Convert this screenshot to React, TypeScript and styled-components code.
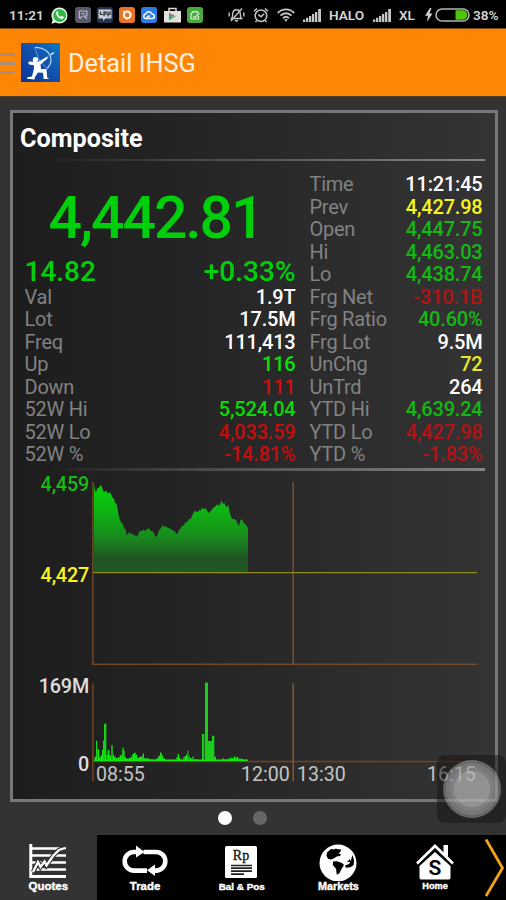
import React from 'react';
import styled, { createGlobalStyle } from 'styled-components';

const GlobalStyle = createGlobalStyle`
  * { box-sizing: border-box; }
  body { margin: 0; background: #333; font-family: Roboto, sans-serif; }
  svg { display: block; flex: none; }
`;

const RED = '#c40d0d';
const YELLOW = '#f8f51c';
const WHITE = '#fff';

const Screen = styled.div`
  position: relative;
  width: 506px;
  height: 900px;
  overflow: hidden;
  display: flex;
  flex-direction: column;
  background: #333;
`;

/* status bar */

const StatusBar = styled.div`
  height: 28px;
  flex: none;
  display: flex;
  align-items: center;
  justify-content: space-between;
  padding: 2px 8px 0 9px;
  background: #000;
  color: #d4d4d4;
`;

const StatusGroup = styled.div<{ $gap: number }>`
  display: flex;
  align-items: center;
  gap: ${(p) => p.$gap}px;
`;

const StatusText = styled.span<{ $width: number }>`
  width: ${(p) => p.$width}px;
  font-size: 13.6px;
  line-height: 16px;
  font-weight: 600;
  white-space: nowrap;
`;

const NotifyTile = styled.svg<{ $bg: string }>`
  width: 16px;
  height: 16px;
  border-radius: 3px;
  background: ${(p) => p.$bg};
`;

/* app bar */

const AppBar = styled.header`
  height: 69px;
  flex: none;
  display: flex;
  align-items: center;
  background: #ff8604;
  border-top: 1px solid #7a430c;
  border-bottom: 1px solid #4b3c2a;
`;

const MenuBars = styled.div`
  width: 15px;
  height: 21px;
  display: flex;
  flex-direction: column;
  justify-content: space-between;
  margin-right: 6px;
  margin-top: 2px;
`;

const MenuLine = styled.span`
  height: 3px;
  background: #a88d78;
`;

const AppTitle = styled.h1`
  margin: 2px 0 0 8px;
  font-size: 25.3px;
  line-height: 30px;
  font-weight: 400;
  color: #fff0e2;
`;

/* panel */

const Panel = styled.main`
  flex: none;
  height: 692px;
  margin: 13px 8px 0 10px;
  display: flex;
  flex-direction: column;
  border: 3px solid #777;
  background: linear-gradient(90deg, #1d1d1d, #242424 35%, #2d2d2d 70%, #343434);
`;

const PanelTitle = styled.h2`
  margin: 0;
  height: 46px;
  padding: 11px 0 0 7px;
  font-size: 25.2px;
  line-height: 30px;
  font-weight: 700;
  color: #fff;
`;

const Divider = styled.div<{ $size: number }>`
  flex: none;
  height: ${(p) => p.$size}px;
  margin: 0 10px 0 7px;
  background: linear-gradient(90deg, transparent 6%, #4a4a4a 40%, #858585);
`;

const Stats = styled.section`
  display: grid;
  grid-template-columns: 271px 173px;
  column-gap: 14px;
  height: 307px;
  padding: 12px 0 0 11.5px;
  flex: none;
`;

const StatColumn = styled.div`
  display: flex;
  flex-direction: column;
`;

const LastPrice = styled.div`
  height: 82px;
  padding-top: 13px;
  padding-right: 9px;
  text-align: center;
  font-size: 59px;
  line-height: 63px;
  font-weight: 500;
  letter-spacing: -2.1px;
  color: #00cf0b;
`;

const ChangeLine = styled.div`
  height: 30.5px;
  display: flex;
  justify-content: space-between;
  font-size: 28px;
  line-height: 33px;
  font-weight: 500;
  color: #00cf0b;
`;

const Row = styled.div`
  height: 22.5px;
  display: flex;
  justify-content: space-between;
  font-size: 20px;
  line-height: 22.5px;
`;

const Label = styled.span`
  letter-spacing: -0.25px;
  color: #828282;
`;

const Value = styled.span<{ $color: string }>`
  font-weight: 500;
  letter-spacing: -0.2px;
  color: ${(p) => p.$color};
`;

/* charts */

const ChartRow = styled.section<{ $height: number; $gap: number }>`
  flex: none;
  display: grid;
  grid-template-columns: 76px 388px;
  grid-template-rows: 100%;
  column-gap: 2px;
  height: ${(p) => p.$height}px;
  margin-top: ${(p) => p.$gap}px;
`;

const AxisLabels = styled.div<{ $shift: number }>`
  display: flex;
  flex-direction: column;
  align-items: flex-end;
  margin-top: ${(p) => p.$shift}px;
`;

const AxisLabel = styled.span<{ $color: string; $step: number }>`
  flex: none;
  height: ${(p) => p.$step}px;
  font-size: 19.8px;
  line-height: 23px;
  font-weight: 500;
  letter-spacing: -0.2px;
  color: ${(p) => p.$color};
`;

const Plot = styled.svg`
  width: 388px;
  height: 100%;
  overflow: visible;
`;

const TimeAxis = styled.div`
  display: grid;
  grid-template-columns: 145px 56px 130px 50px;
  padding-left: 83px;
  margin-top: 1px;
  font-size: 19.6px;
  line-height: 23px;
  font-weight: 400;
  color: #c4c4c4;
`;

const Pager = styled.div`
  flex: none;
  height: 33px;
  display: flex;
  justify-content: center;
  align-items: center;
  gap: 21px;
  padding: 0 21px 1px 0;
`;

const PagerDot = styled.span<{ $active?: boolean }>`
  width: 14px;
  height: 14px;
  border-radius: 50%;
  background: ${(p) => (p.$active ? '#fff' : '#666')};
`;

/* bottom navigation */

const BottomNav = styled.nav`
  height: 65px;
  flex: none;
  display: grid;
  grid-template-columns: repeat(5, 96.7px) 21px;
  background: #000;
`;

const Tab = styled.button<{ $active?: boolean }>`
  border: 0;
  padding: 8px 0 0;
  display: flex;
  flex-direction: column;
  align-items: center;
  background: ${(p) => (p.$active ? '#333' : '#000')};
  color: #fff;
`;

const TabLabel = styled.span<{ $size: number }>`
  margin-top: auto;
  height: 20px;
  font-family: 'Liberation Sans', Arial, sans-serif;
  font-size: ${(p) => p.$size}px;
  line-height: 11px;
  font-weight: 700;
  -webkit-text-stroke: 0.4px #fff;
  white-space: nowrap;
`;

/* floating touch button */

const FloatingPad = styled.div`
  position: absolute;
  left: 437px;
  top: 755px;
  width: 69px;
  height: 68px;
  border-radius: 8px;
  display: flex;
  align-items: center;
  justify-content: center;
  background: rgba(20, 20, 20, 0.5);
`;

const FloatingRing = styled.div`
  width: 58px;
  height: 58px;
  border-radius: 50%;
  background: radial-gradient(
    circle closest-side,
    rgba(255, 255, 255, 0.5) 0 62%,
    rgba(255, 255, 255, 0.42) 64% 74%,
    rgba(255, 255, 255, 0.38) 76% 88%,
    rgba(255, 255, 255, 0.3) 91% 100%
  );
`;

type Stat = [string, string, string];

const leftStats: Stat[] = [
  ['Val', '1.9T', WHITE],
  ['Lot', '17.5M', WHITE],
  ['Freq', '111,413', WHITE],
  ['Up', '116', '#0be00b'],
  ['Down', '111', '#cf0d0d'],
  ['52W Hi', '5,524.04', '#0bd80b'],
  ['52W Lo', '4,033.59', RED],
  ['52W %', '-14.81%', RED],
];

const rightStats: Stat[] = [
  ['Time', '11:21:45', WHITE],
  ['Prev', '4,427.98', YELLOW],
  ['Open', '4,447.75', '#13b813'],
  ['Hi', '4,463.03', '#13b813'],
  ['Lo', '4,438.74', '#13b813'],
  ['Frg Net', '-310.1B', '#b01414'],
  ['Frg Ratio', '40.60%', '#13b813'],
  ['Frg Lot', '9.5M', WHITE],
  ['UnChg', '72', '#e9e62c'],
  ['UnTrd', '264', WHITE],
  ['YTD Hi', '4,639.24', '#13b813'],
  ['YTD Lo', '4,427.98', '#b01414'],
  ['YTD %', '-1.83%', '#b01414'],
];

const priceLine =
  '282,55 284,72 288,83 292,70 297,68 302,60 306,66 309,77 313,82 318,76 323,86 328,82 333,86 338,98 342,102 346,114 351,121 354,140 358,160 363,172 368,177 373,190 377,194 380,212 384,205 388,202 392,208 397,205 402,212 407,211 411,215 416,205 420,197 425,199 430,194 436,198 441,193 446,189 450,195 455,199 460,201 465,212 470,216 474,205 478,194 483,190 488,181 493,185 499,184 504,190 510,190 514,194 520,197 524,199 529,208 534,204 538,193 543,190 547,181 551,183 556,172 562,172 567,162 572,163 577,150 581,143 586,137 592,142 598,135 602,137 606,128 611,132 617,130 622,139 628,145 633,137 638,131 642,126 648,124 652,117 657,123 661,118 664,106 668,117 673,113 678,127 685,121 688,140 693,154 697,163 702,161 708,166 713,177 717,184 721,166 725,163 730,172 736,178 740,184 744,189';

// Each bar is [x, top, width] on the volume plot, whose floor sits at 303.
const volumeBars: number[][] = [
  [284, 290, 4], [288, 242, 4], [292, 268, 5], [297, 292, 5], [302, 286, 4], [306, 270, 4], [309, 242, 4],
  [312, 191, 7], [319, 284, 4], [323, 270, 5], [328, 286, 5], [334, 255, 4], [338, 284, 4], [342, 290, 5],
  [347, 294, 6], [353, 292, 6], [359, 286, 5], [364, 284, 4], [367, 263, 4], [370, 272, 4], [373, 291, 5],
  [378, 296, 8], [386, 294, 6], [392, 290, 5], [397, 282, 5], [402, 278, 5], [407, 284, 5], [412, 294, 5],
  [417, 291, 6], [423, 289, 5], [428, 281, 4], [432, 295, 8], [440, 295, 7], [447, 298, 14], [463, 298, 8],
  [471, 293, 5], [476, 287, 4], [480, 278, 5], [485, 286, 4], [489, 295, 6], [496, 299, 16], [514, 299, 14],
  [529, 292, 4], [533, 282, 4], [537, 293, 4], [543, 298, 5], [550, 291, 4], [554, 288, 4], [558, 284, 4],
  [562, 272, 3], [565, 289, 4], [570, 294, 5], [577, 290, 4], [583, 298, 10], [593, 299, 14], [606, 222, 7],
  [615, 68, 9], [624, 243, 12], [636, 227, 7], [643, 290, 5], [648, 299, 20], [668, 295, 4], [673, 298, 10],
  [684, 296, 5], [690, 293, 5], [696, 294, 5], [702, 289, 4], [706, 293, 5], [711, 291, 4], [716, 296, 6],
  [723, 296, 6], [730, 299, 14],
];

const SignalIcon = () => (
  <svg width="18" height="13" viewBox="0 0 18 13" fill="#c6c6c6">
    <path d="M0 10.5h2.3V13H0zM3 8.8h2.3V13H3zM6 7h2.3v6H6zM9 5h2.3v8H9zM12 3h2.3v10H12zM15.2 0H18v13h-2.8z" />
  </svg>
);

const NotificationIcons = () => (
  <>
    <svg width="17" height="17" viewBox="0 0 17 17">
      <path d="M8.5.5a8 8 0 0 1 0 16c-1.4 0-2.8-.3-3.9-1L.5 16.7l1.2-4A8 8 0 0 1 8.5.5z" fill="#e8f5ea" />
      <circle cx="8.6" cy="8.5" r="6.5" fill="#2fb944" />
      <path d="M5.3 5c.7-1 1.5-.8 1.900.4.4 1 0 1.300-.3 1.700.7 1.400 1.700 2.300 3 2.800.7-.9 1-1 2-.4 1.200.6 1 1 .5 1.700C9.900 13.800 4 8.500 5.300 5z" fill="#fff" />
    </svg>
    <NotifyTile $bg="#585a6c" viewBox="0 0 16 16">
      <g fill="none" stroke="#b9bac6" strokeWidth="1.200">
        <path d="M4.300 11.500V4h7.500v5H8.500M5 11.500l2.500-2.300M8.500 8.500l3.500 3.500" />
        <path d="M6.500 6.700h3" />
      </g>
    </NotifyTile>
    <NotifyTile $bg="#26334e" viewBox="0 0 16 16">
      <path d="M1.500 2.500h13v9h-6L6 14v-2.500H1.500z" fill="#c9ced7" />
      <path d="M3.500 4.500v3h2.300M7 4.500v4.800M7 5h2v2H7M11 4.500v5M13 4.500v3h-2" fill="none" stroke="#252b3a" strokeWidth="1.200" />
    </NotifyTile>
    <NotifyTile $bg="#ec7424" viewBox="0 0 16 16">
      <circle cx="8.200" cy="8" r="3.400" fill="none" stroke="#fff" strokeWidth="2" />
      <path d="M4.200 4l2 1.500" stroke="#fff" strokeWidth="1.500" />
    </NotifyTile>
    <NotifyTile $bg="#2c7be5" viewBox="0 0 16 16">
      <path d="M4.500 11.500a2.300 2.300 0 0 1 0-4.500 3.500 3.500 0 0 1 6.500 0 2.300 2.300 0 0 1 .7 4.500zM6 11.500c0-2 1.500-3 3-2" fill="none" stroke="#fff" strokeWidth="1.500" />
    </NotifyTile>
    <svg width="17" height="17" viewBox="0 0 17 17">
      <path d="M5 4V1.500h7V4" fill="none" stroke="#d8d8d8" strokeWidth="1.500" />
      <path d="M0 4h17v11.500H0z" fill="#e2e2dc" />
      <path d="M5 5.500l3.500 4L5 13.500z" fill="#20a6a0" />
      <path d="M5 5.500l7 4H8.500z" fill="#e7484a" />
      <path d="M5 13.500l3.500-4H12z" fill="#58b75b" />
    </svg>
    <NotifyTile $bg="#48ab3b" viewBox="0 0 16 16">
      <g fill="none" stroke="#d9f0d5" strokeWidth="1.200">
        <path d="M5 4.500h5.500M4 7c1-3 7-3 8 0M4 7v5h7.500V9M6 9.500l2 1 3.500-3.500" />
      </g>
    </NotifyTile>
  </>
);

const SystemIcons = () => (
  <>
    <svg width="17" height="16" viewBox="0 0 17 16" fill="none" stroke="#c6c6c6" strokeWidth="1.400">
      <path d="M3.500 11.500h10c-1.500-1.500-1-3-1.200-5C12 4 10.500 2.800 8.500 2.800S5 4 4.700 6.500c-.2 2 .3 3.500-1.200 5zM7 13.300c.8 1 2.200 1 3 0M14 1.500L3 14M1.200 5.500v4M15.800 5.500v4" />
    </svg>
    <svg width="16" height="16" viewBox="0 0 16 16" fill="none" stroke="#c6c6c6" strokeWidth="1.500">
      <circle cx="8" cy="8.700" r="5.800" />
      <path d="M1 4.300L4 1.500M15 4.300L12 1.500M5.200 7.500L8 9.700l3-3M3.800 13.500l-1.300 1.500M12.200 13.500l1.300 1.500" />
    </svg>
    <svg width="18" height="14" viewBox="0 0 18 14" fill="none" stroke="#c6c6c6" strokeWidth="1.900">
      <path d="M.8 5C5.500.2 12.500.2 17.200 5M3.500 7.700c3.200-3.200 7.800-3.200 11 0M6.100 10.200c1.800-1.700 4-1.700 5.800 0" />
      <path d="M7 11.200h4L9 13.700z" fill="#c6c6c6" stroke="none" />
    </svg>
  </>
);

const BatteryIcon = () => (
  <svg width="45" height="14" viewBox="0 0 45 14">
    <path d="M5 0L0 7.700h3L2 14l5.500-8.500h-3L6.500 0z" fill="#cfcfcf" />
    <rect x="11" y="1" width="33" height="12" rx="6" fill="none" stroke="#b5b5b5" strokeWidth="1.600" />
    <path d="M30.500 2.200H37.500a4.800 4.800 0 0 1 0 9.600H30.500z" fill="#4fc60c" />
  </svg>
);

const ArcherLogo = () => (
  <svg width="39" height="39" viewBox="0 0 39 39">
    <defs>
      <linearGradient id="logoSky" x1="0" y1="1" x2="1" y2="0">
        <stop offset="0" stopColor="#0b3394" />
        <stop offset="0.55" stopColor="#1252ad" />
        <stop offset="1" stopColor="#0878c4" />
      </linearGradient>
    </defs>
    <rect width="39" height="39" fill="url(#logoSky)" />
    <path d="M14 4.500C21 4 29 8 30 16c.4 4-1.500 7-4 9.500" fill="none" stroke="#b6d2ee" strokeWidth="1.200" />
    <path d="M14 4.500L18 17l8 8.500M17 19.500L33.500 9.500" fill="none" stroke="#8bb1dc" strokeWidth=".7" />
    <path d="M33.500 9.200l-4 1 1.500 2.200z" fill="#dceaf7" />
    <circle cx="14.500" cy="16.700" r="2.700" fill="#fff" />
    <path d="M7 20l1.500-1.500L17 19l9-5.300.8 1.600-7.300 6.200.5 4.500h5.500l.7 8.500 2 1.500h-5.500l-.7-6.300-5-.2-3 4.500-.5 2.500-7.500-.7.300-1.500 4.700-.8 2-8-.3-3.500-4-.3z" fill="#fff" />
  </svg>
);

const PriceChart = () => (
  <Plot viewBox="273 45 1164 555" preserveAspectRatio="none">
    <defs>
      <linearGradient id="priceFill" gradientUnits="userSpaceOnUse" x1="0" y1="55" x2="0" y2="322">
        <stop offset="0" stopColor="#05d60b" />
        <stop offset="0.3" stopColor="#0db512" />
        <stop offset="0.6" stopColor="#188b1d" />
        <stop offset="0.86" stopColor="#205223" />
        <stop offset="1" stopColor="#205a24" />
      </linearGradient>
    </defs>
    <polygon points={`281,322 ${priceLine} 744,322`} fill="url(#priceFill)" />
    <path d="M278.500 50V597.500H1433" fill="none" stroke="#70492a" strokeWidth="4.500" />
    <path d="M879.500 50V597" stroke="#80552f" strokeWidth="4" />
    <path d="M279 323H1431" stroke="#8f8a20" strokeWidth="4" />
  </Plot>
);

const VolumeChart = () => (
  <Plot viewBox="273 66 1164 240" preserveAspectRatio="none">
    <path d="M278.500 70V363" stroke="#70452a" strokeWidth="4.500" />
    <path d="M279 304.500H1431" stroke="#744322" strokeWidth="5" />
    <path d="M879.500 70V363" stroke="#8e602f" strokeWidth="4" />
    <g fill="#12ea12">
      {volumeBars.map(([x, top, width]) => (
        <rect key={x} x={x} y={top} width={width} height={303 - top} fill={top < 250 ? '#19cf19' : undefined} />
      ))}
      <rect x="282" y="299" width="462" height="4" />
    </g>
  </Plot>
);

const QuotesIcon = () => (
  <svg width="38" height="35" viewBox="0 0 38 35" fill="none" stroke="#fff">
    <path d="M1.800 1v32.500H37" strokeWidth="3" />
    <path d="M3 5.500h34M3 12.500h34M3 19.500h34M3 26.500h34" strokeWidth="2.400" />
    <path d="M4 29l5-10 2.500 5 4-5.500 2 4L24 13l6-6 6-2" stroke="#333" strokeWidth="4.500" />
    <path d="M4 29l5-10 2.500 5 4-5.500 2 4L24 13l6-6 6-2" strokeWidth="2.300" />
  </svg>
);

const TradeIcon = () => (
  <svg width="46" height="35" viewBox="0 0 46 35">
    <g fill="none" stroke="#fff" strokeWidth="4.600">
      <path d="M16 9h-4a9.300 9.300 0 0 0 0 18.600H25" />
      <path d="M21.500 9H34a9.300 9.300 0 0 1 0 18.600H31" />
    </g>
    <path d="M14 2.500l8.500 6.500-8.500 5.500zM33 21.500L25 27.300l8 5.700z" fill="#fff" />
  </svg>
);

const BalanceIcon = () => (
  <svg width="33" height="35" viewBox="0 0 33 35">
    <rect x="0" y="3" width="32" height="32" rx="1.500" fill="#fff" />
    <text x="16" y="17" textAnchor="middle" fontFamily="Liberation Serif, serif" fontSize="14" fill="#111" stroke="#111" strokeWidth=".3">
      Rp
    </text>
    <path d="M6 22.500h21M6 25.200h21M6 28.200h21M6 31.200h13" stroke="#222" strokeWidth="1.700" />
  </svg>
);

const MarketsIcon = () => (
  <svg width="38" height="38" viewBox="0 0 38 38">
    <circle cx="19" cy="20" r="18.500" fill="#fff" />
    <path d="M8 9.500l4-3.500 3.500.5 1-1 2.500.7 3.200.3-.7 2-2 2.300 2.500.3-1 2-3.300.4-3 2-2.700 1-3-.7-1.500-3zM14 18.500l4-.3 5 1.700 2 2-2.600 4.300-2 4-2.600 1.500-.8-6-3.200-3.600zM33.500 12l1.500 5-.3 5-3.200 2.300-4.500.5-1-2.200 4-1.500 1.500-2.500zM28 19l3-3 .5 3z" fill="#000" />
  </svg>
);

const HomeIcon = () => (
  <svg width="38" height="37" viewBox="0 0 38 37">
    <path d="M3.500 35V23L19 9l15.500 14v12q0 1.500-2 1.500h-27q-2 0-2-1.500z" fill="#fff" />
    <path d="M1 20.500L19 3l18 17.500" fill="none" stroke="#000" strokeWidth="6" />
    <path d="M1 20.500L19 3l18 17.500" fill="none" stroke="#fff" strokeWidth="2.700" />
    <path d="M27.500 10V2h4.500v12.500" fill="#fff" />
    <text x="19" y="32" textAnchor="middle" fontFamily="Roboto, sans-serif" fontSize="21" fontWeight="600" fill="#000">
      S
    </text>
  </svg>
);

const tabs = [
  { label: 'Quotes', size: 11.5, Icon: QuotesIcon },
  { label: 'Trade', size: 11.4, Icon: TradeIcon },
  { label: 'Bal & Pos', size: 9.9, Icon: BalanceIcon },
  { label: 'Markets', size: 10.8, Icon: MarketsIcon },
  { label: 'Home', size: 9.2, Icon: HomeIcon },
];

const StatRows = ({ items }: { items: Stat[] }) => (
  <>
    {items.map(([label, value, color]) => (
      <Row key={label}>
        <Label>{label}</Label>
        <Value $color={color}>{value}</Value>
      </Row>
    ))}
  </>
);

export default function App() {
  return (
    <Screen>
      <GlobalStyle />
      <StatusBar>
        <StatusGroup $gap={6.3}>
          <StatusText $width={36}>11:21</StatusText>
          <NotificationIcons />
        </StatusGroup>
        <StatusGroup $gap={8}>
          <SystemIcons />
          <SignalIcon />
          <StatusText $width={36}>HALO</StatusText>
          <SignalIcon />
          <StatusText $width={18}>XL</StatusText>
          <StatusGroup $gap={3}>
            <BatteryIcon />
            <StatusText $width={25}>38%</StatusText>
          </StatusGroup>
        </StatusGroup>
      </StatusBar>

      <AppBar>
        <MenuBars>
          <MenuLine />
          <MenuLine />
          <MenuLine />
        </MenuBars>
        <ArcherLogo />
        <AppTitle>Detail IHSG</AppTitle>
      </AppBar>

      <Panel>
        <PanelTitle>Composite</PanelTitle>
        <Divider $size={2} />
        <Stats>
          <StatColumn>
            <LastPrice>4,442.81</LastPrice>
            <ChangeLine>
              <span>14.82</span>
              <span>+0.33%</span>
            </ChangeLine>
            <StatRows items={leftStats} />
          </StatColumn>
          <StatColumn>
            <StatRows items={rightStats} />
          </StatColumn>
        </Stats>
        <Divider $size={3} />

        <ChartRow $height={185} $gap={9}>
          <AxisLabels $shift={-7}>
            <AxisLabel $color="#16bb16" $step={91}>4,459</AxisLabel>
            <AxisLabel $color={YELLOW} $step={24}>4,427</AxisLabel>
          </AxisLabels>
          <PriceChart />
        </ChartRow>
        <ChartRow $height={80} $gap={17}>
          <AxisLabels $shift={-7}>
            <AxisLabel $color="#dedede" $step={78}>169M</AxisLabel>
            <AxisLabel $color="#dedede" $step={24}>0</AxisLabel>
          </AxisLabels>
          <VolumeChart />
        </ChartRow>
        <TimeAxis>
          <span>08:55</span>
          <span>12:00</span>
          <span>13:30</span>
          <span>16:15</span>
        </TimeAxis>
      </Panel>

      <Pager>
        <PagerDot $active />
        <PagerDot />
      </Pager>

      <BottomNav>
        {tabs.map(({ label, size, Icon }, index) => (
          <Tab key={label} $active={index === 0}>
            <Icon />
            <TabLabel $size={size}>{label}</TabLabel>
          </Tab>
        ))}
        <svg width="22" height="65" viewBox="0 0 22 65">
          <path d="M3 4.500L19.500 33 3 61" fill="none" stroke="#f5a01c" strokeWidth="2.800" />
        </svg>
      </BottomNav>

      <FloatingPad>
        <FloatingRing />
      </FloatingPad>
    </Screen>
  );
}
